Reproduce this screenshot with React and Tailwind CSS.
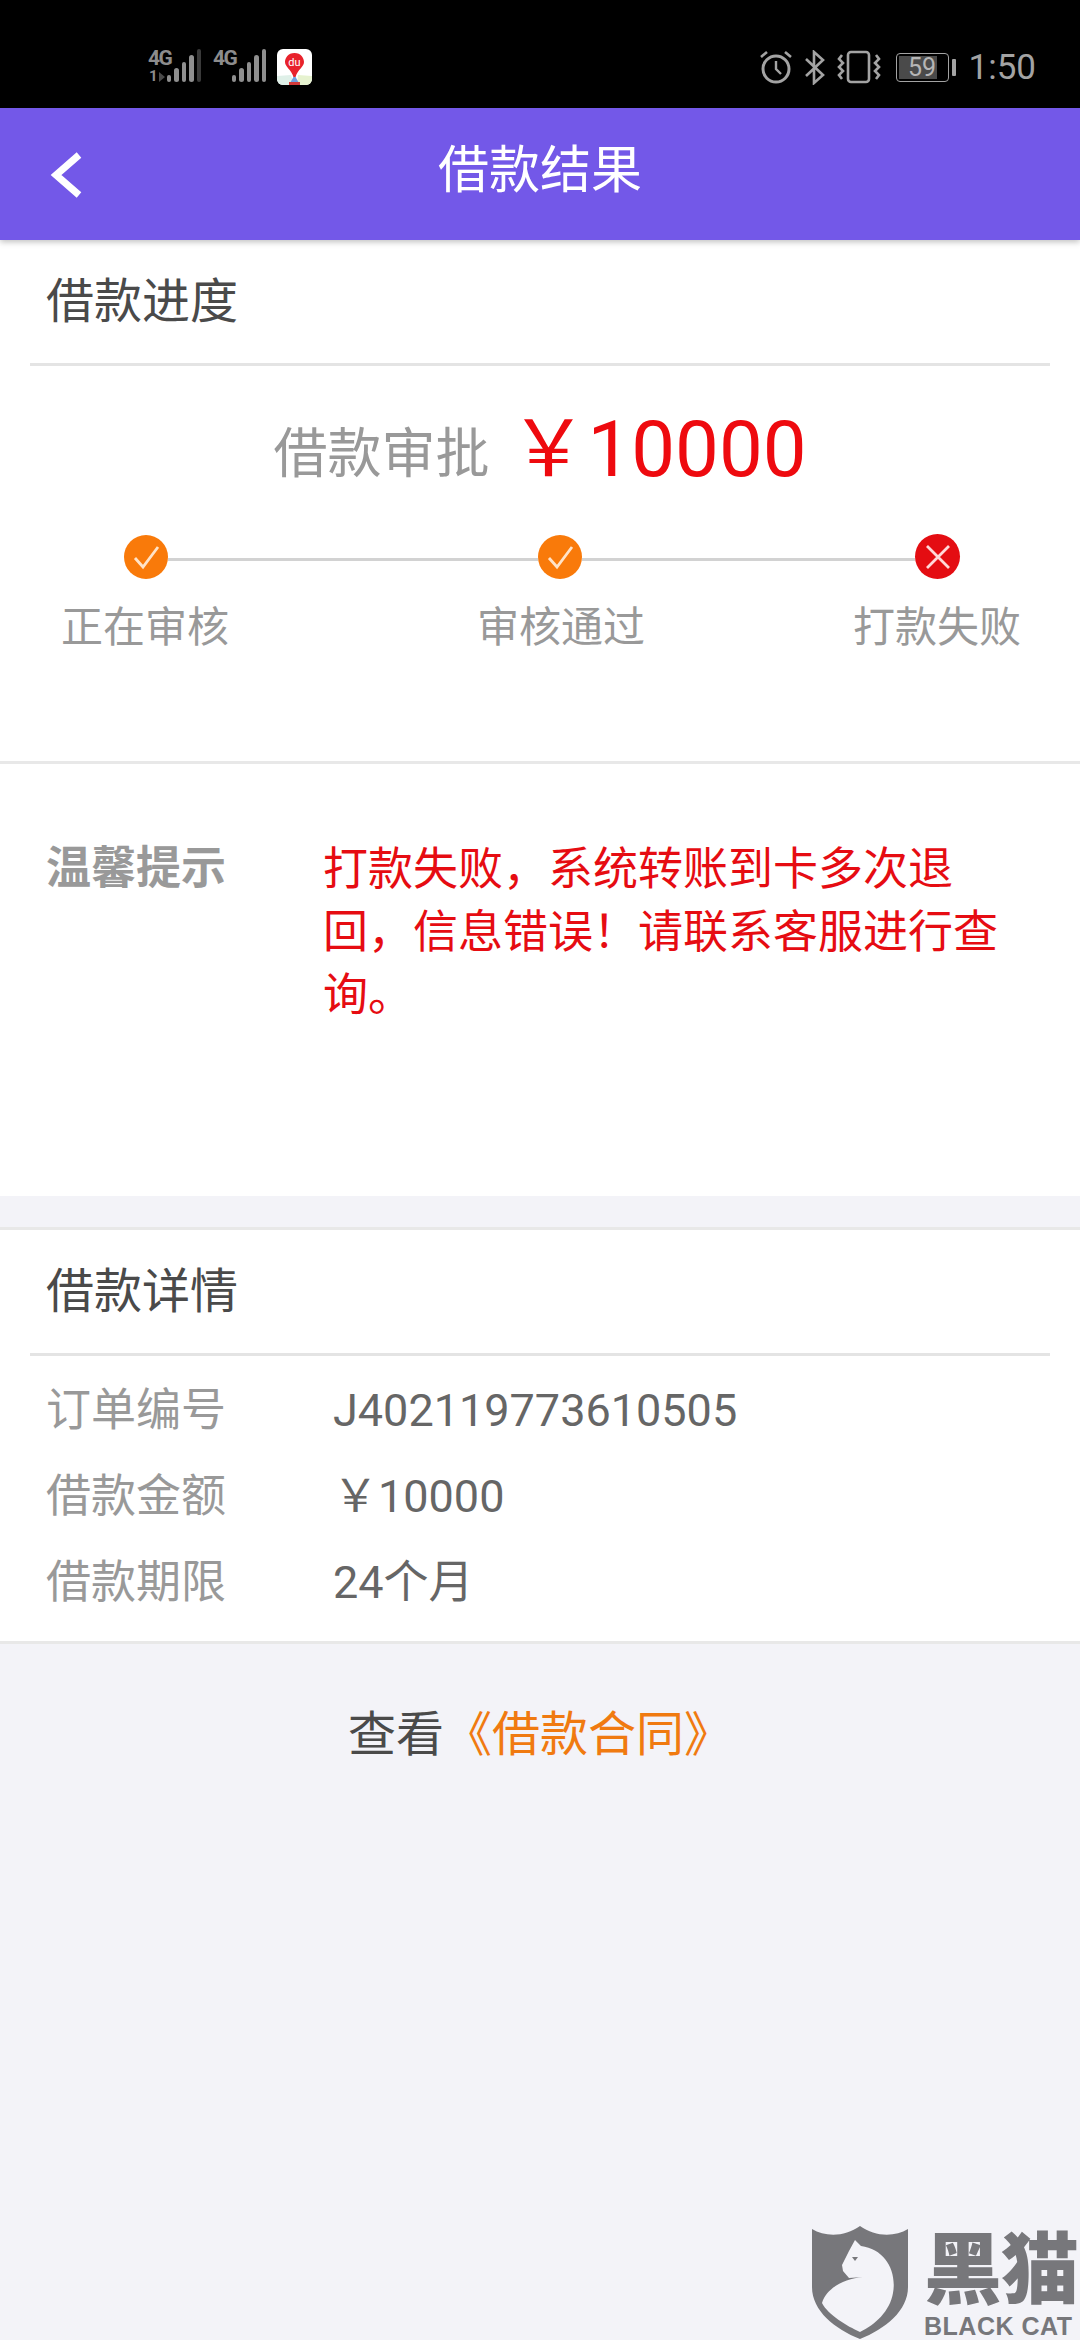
const sans = "font-['Roboto','Noto_Sans_CJK_SC',sans-serif]"

function Signal({ dim }) {
  const bars = [7, 14, 20, 27, 33]
  return (
    <div className="flex items-end gap-[3px] h-[33px]">
      {bars.map((h, i) => (
        <div
          key={h}
          className={`w-[4.5px] rounded-full ${dim && i === 4 ? 'bg-[#3a3a3a]' : 'bg-[#8f8f8f]'}`}
          style={{ height: h }}
        />
      ))}
    </div>
  )
}

function Sim({ sub }) {
  return (
    <div className="flex items-end w-[53px] h-[33px] relative">
      <span className="absolute left-0 top-[1px] text-[21px] leading-[16px] font-bold tracking-[-1.5px] text-[#8c8c8c] font-['Roboto',sans-serif]">4G</span>
      {sub && <span className="absolute left-[1px] bottom-[-1px] text-[15px] leading-[13px] font-bold text-[#8c8c8c] font-['Roboto',sans-serif]">1</span>}
      {sub && <div className="absolute left-[11px] bottom-0 w-0 h-0 border-y-[5px] border-y-transparent border-l-[6px] border-l-[#4a4a4a]" />}
      <div className="ml-auto"><Signal dim={sub} /></div>
    </div>
  )
}

function MapIcon() {
  return (
    <div className="w-[35px] h-[36px] rounded-[6px] bg-white overflow-hidden relative flex justify-center">
      <svg width="35" height="36" viewBox="0 0 35 36">
        <path d="M0 27 L14 26 L17 36 L0 36Z" fill="#dff0e8" />
        <path d="M21 26 L35 27 L35 36 L20 36Z" fill="#e6f2cf" />
        <path d="M17.5 26 L12 36 L23 36Z" fill="#6f9fe0" />
        <rect x="12" y="33" width="11" height="3" fill="#d23a3a" />
        <path d="M17.5 4 C24 4 27 9 27 13 C27 18 21 20 18.5 28 L16.5 28 C14 20 8 18 8 13 C8 9 11 4 17.5 4Z" fill="#e8222c" />
        <text x="17.5" y="17" textAnchor="middle" fontSize="11" fill="#fff" fontFamily="Roboto, sans-serif">du</text>
      </svg>
    </div>
  )
}

function StatusBar() {
  return (
    <div className="h-[108px] bg-black flex items-start pt-[49px] pl-[148px] pr-[44px]">
      <Sim sub />
      <div className="ml-[12px]"><Sim /></div>
      <div className="ml-[11px]"><MapIcon /></div>
      <div className="ml-auto flex items-center h-[36px] text-[#a3a3a3]">
        <svg width="34" height="34" viewBox="0 0 34 34" fill="none" stroke="#a3a3a3" strokeWidth="3">
          <circle cx="17" cy="19" r="13" />
          <path d="M17 11 V19 L22 24" strokeWidth="2.4" />
          <path d="M2 7 L8 2 M32 7 L26 2" strokeWidth="2.6" />
        </svg>
        <svg className="ml-[11px]" width="22" height="35" viewBox="0 0 22 35" fill="none" stroke="#a3a3a3" strokeWidth="2.6">
          <path d="M2 9 L19 25 L10 33 V2 L19 10 L2 26" />
        </svg>
        <svg className="ml-[11px]" width="44" height="34" viewBox="0 0 44 34" fill="none" stroke="#a3a3a3" strokeWidth="2.6">
          <rect x="11" y="2" width="21" height="30" rx="3" />
          <path d="M5 5 L2 9 L6 13 L2 17 L6 21 L2 25 L5 29" />
          <path d="M39 5 L42 9 L38 13 L42 17 L38 21 L42 25 L39 29" />
        </svg>
        <div className="ml-[15px] flex items-center">
          <div className="relative w-[53px] h-[29px] rounded-[4px] border border-[#a3a3a3] p-[2px]">
            <div className="w-[38px] h-full bg-[#4a4a4a]" />
            <span className="absolute inset-0 flex items-center justify-center text-[25px] leading-none text-[#b5b5b5] font-['Roboto',sans-serif]">59</span>
          </div>
          <div className="ml-[3px] w-[4px] h-[17px] bg-[#a3a3a3] rounded-[1px]" />
        </div>
        <span className="ml-[13px] text-[35px] leading-none font-['Roboto',sans-serif]">1:50</span>
      </div>
    </div>
  )
}

function Check() {
  return (
    <div className="w-[44px] h-[44px] shrink-0 rounded-full bg-[#f97a0a] flex items-center justify-center">
      <svg width="30" height="26" viewBox="0 0 30 26" fill="none" stroke="#ffe3c8" strokeWidth="2.8">
        <path d="M4 14 L12 23 L27 3" />
      </svg>
    </div>
  )
}

function Cross() {
  return (
    <div className="w-[45px] h-[45px] shrink-0 rounded-full bg-[#e40d12] flex items-center justify-center">
      <svg width="28" height="28" viewBox="0 0 28 28" fill="none" stroke="#ffd9d9" strokeWidth="2.8">
        <path d="M3 3 L25 25 M25 3 L3 25" />
      </svg>
    </div>
  )
}

function Connector({ width }) {
  return <div className="h-[3px] mt-[6px] bg-[#d2d2d2]" style={{ width }} />
}

function DetailRow({ label, value }) {
  return (
    <div className="flex items-center h-[86px]">
      <span className="w-[333px] pl-[46px] text-[45px] text-[#999999] leading-none">{label}</span>
      <span className="text-[45px] text-[#666666] leading-none whitespace-pre">{value}</span>
    </div>
  )
}

export default function App() {
  return (
    <div className={`relative w-[1080px] h-[2340px] overflow-hidden bg-[#f3f3f8] ${sans}`}>
      <StatusBar />

      <div className="relative z-10 h-[132px] bg-[#7358e8] shadow-[0_2px_6px_rgba(0,0,0,0.25)] flex items-center justify-center pb-[8px]">
        <svg className="absolute left-[50px] top-[44px]" width="32" height="46" viewBox="0 0 32 46" fill="none" stroke="#fff" strokeWidth="7">
          <path d="M29 3 L6 23 L29 43" />
        </svg>
        <span className="text-[51px] text-white leading-none">借款结果</span>
      </div>

      <section className="bg-white h-[524px] border-b-[3px] border-[#e8e8e8]">
        <div className="mx-[30px] h-[126px] border-b-[3px] border-[#e4e4e4] flex items-center pl-[16px]">
          <h2 className="text-[48px] font-normal text-[#4a4a4a] leading-none">借款进度</h2>
        </div>
        <div className="flex items-center justify-center gap-[20px] h-[116px] pt-[52px]">
          <span className="text-[54px] text-[#999999] leading-none mt-[10px]">借款审批</span>
          <span className="text-[78px] text-[#ee0a0f] leading-none">￥10000</span>
        </div>
        <div className="flex items-center mt-[52px] pl-[124px]">
          <Check />
          <Connector width={370} />
          <Check />
          <Connector width={333} />
          <Cross />
        </div>
        <div className="flex mt-[28px] text-[42px] text-[#999999] leading-none">
          <span className="ml-[61px] w-[168px]">正在审核</span>
          <span className="ml-[248px] w-[168px]">审核通过</span>
          <span className="ml-[208px] w-[168px]">打款失败</span>
        </div>
      </section>

      <section className="bg-white h-[432px] flex pt-[74px]">
        <span className="w-[323px] pl-[46px] text-[45px] font-bold text-[#999999] leading-[62px]">温馨提示</span>
        <p className="w-[680px] text-[45px] text-[#e60c12] leading-[63px]">打款失败，系统转账到卡多次退回，信息错误！请联系客服进行查询。</p>
      </section>

      <section className="mt-[31px] bg-white h-[417px] border-t-[3px] border-b-[3px] border-[#e8e8e8]">
        <div className="mx-[30px] h-[126px] border-b-[3px] border-[#e4e4e4] flex items-center pl-[16px]">
          <h2 className="text-[48px] font-normal text-[#4a4a4a] leading-none">借款详情</h2>
        </div>
        <div className="pt-[11px]">
          <DetailRow label="订单编号" value="J402119773610505" />
          <DetailRow label="借款金额" value="￥10000" />
          <DetailRow label="借款期限" value="24个月" />
        </div>
      </section>

      <div className="flex justify-center pt-[67px] text-[48px] leading-none text-[#4a4a4a]">
        <span>查看</span>
        <span className="text-[#f07a10]">《借款合同》</span>
      </div>

      <div className="absolute left-[811px] top-[2225px] flex">
        <svg width="98" height="115" viewBox="0 0 98 115">
          <path d="M1 4 C14 12 34 12 49 1 C64 12 84 12 97 4 V62 C97 86 74 104 49 114 C24 104 1 86 1 62Z" fill="#77777b" />
          <path d="M44 15 L50 21 C74 24 86 46 82 68 C79 86 64 100 49 107 C36 101 17 90 11 78 C16 62 34 54 52 52 L38 53 L32 46 L31 40 L38 26 Z" fill="#f3f3f8" />
          <path d="M41 32 L47 32 L44 36Z" fill="#77777b" />
        </svg>
        <div className="ml-[15px] flex flex-col text-[#77777b]">
          <span className="h-[82px] text-[78px] leading-[78px] font-black tracking-[-1px] whitespace-nowrap font-['Noto_Sans_CJK_SC',sans-serif]">黑猫</span>
          <span className="mt-[8px] text-[25px] leading-[22px] font-black tracking-[0.5px] whitespace-nowrap font-['Liberation_Sans',sans-serif]">BLACK CAT</span>
        </div>
      </div>
    </div>
  )
}
